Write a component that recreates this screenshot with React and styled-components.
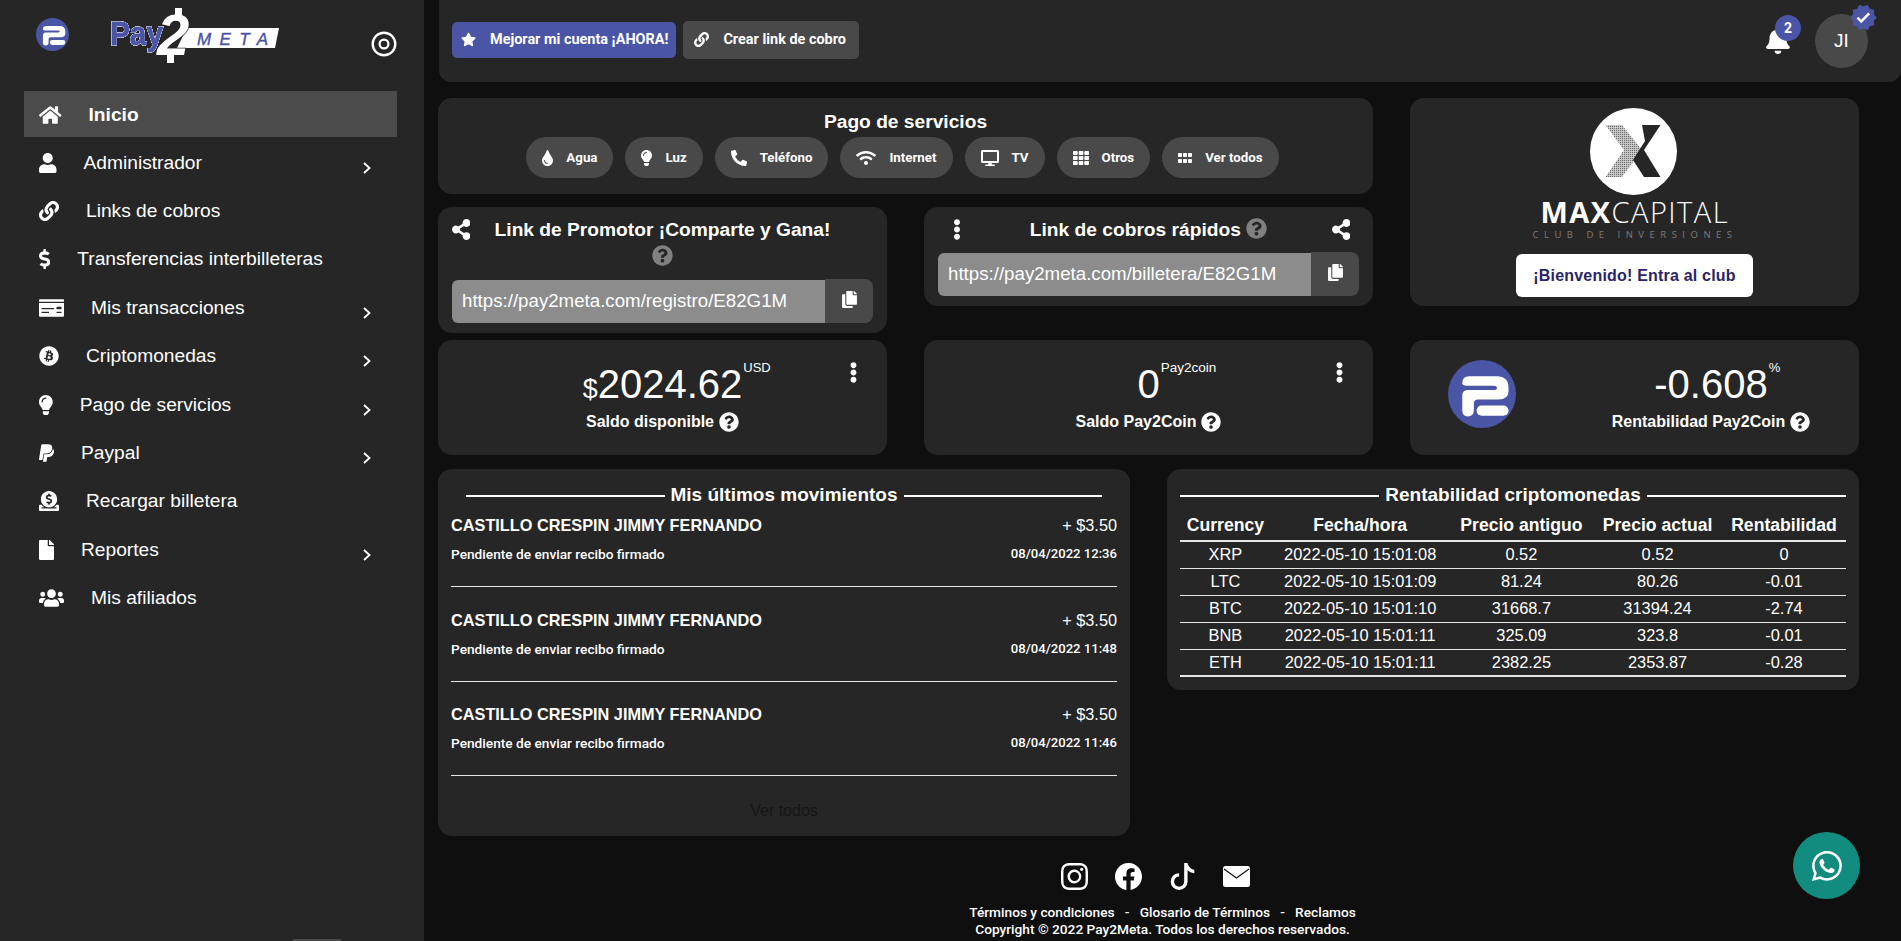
import React from "react"
import styled, { createGlobalStyle } from "styled-components"
import {
  FaHome, FaUser, FaLink, FaDollarSign, FaMoneyCheck, FaBitcoin, FaLightbulb, FaPaypal,
  FaDonate, FaFile, FaUsers, FaStar, FaBell, FaTint, FaPhoneAlt, FaWifi, FaDesktop, FaTh,
  FaGripHorizontal, FaShareAlt, FaEllipsisV, FaQuestionCircle, FaCopy,
} from "react-icons/fa"
import { MdVerified } from "react-icons/md"
import { BsInstagram, BsFacebook, BsTiktok, BsWhatsapp } from "react-icons/bs"

const GlobalStyle = createGlobalStyle`
  html, body {
    margin: 0;
    height: 100%;
    overflow: hidden;
    background: #0f0f0f;
    color: #fff;
    font-family: "Liberation Sans", Arial, sans-serif;
  }
  * { box-sizing: border-box; }
`

const Layout = styled.div`
  display: flex;
  width: 1901px;
  height: 941px;
`

const Sidebar = styled.aside`
  position: relative;
  flex: 0 0 424px;
  height: 941px;
  background: #262626;
  padding-left: 24px;
`

const SideHead = styled.div`
  display: flex;
  height: 91px;
  width: 373px;
  padding: 18px 0 0 12px;
`

const LogoSvg = styled.svg`
  flex: none;
  width: 175px;
  height: 56px;
  margin: -10px 0 0 40px;
  overflow: visible;
`

const LogoPay = styled.text`
  font-family: "Liberation Sans", sans-serif;
  font-weight: 700;
  font-size: 33px;
  fill: #4b55a5;
  stroke: #4b55a5;
  stroke-width: 0.9px;
  filter: drop-shadow(0 0 0.5px #fff) drop-shadow(0 0 0.5px #fff) drop-shadow(0 0 0.4px #fff);
`

const RingSvg = styled.svg`
  width: 26px;
  height: 26px;
  margin: 13px 0 0 auto;
`

const Menu = styled.nav`
  display: flex;
  flex-direction: column;
  width: 373px;
`

const MenuItem = styled.a`
  display: flex;
  align-items: center;
  height: ${(p) => (p.$active ? "46px" : "48.4px")};
  margin-bottom: ${(p) => (p.$active ? "1px" : "0")};
  padding: 1px 26px 0 15px;
  background: ${(p) => (p.$active ? "#4b4b4b" : "transparent")};
  font-size: 19.2px;
  font-weight: ${(p) => (p.$active ? 700 : 400)};
  color: #fff;

  svg.main {
    width: ${(p) => p.$iconWidth}px;
    height: 20px;
    margin-right: 27px;
    flex: none;
  }
`

const Chevron = styled.svg`
  width: 8px;
  height: 12px;
  margin: 10px 0 0 auto;
`

const ScrollThumb = styled.div`
  position: absolute;
  left: 293px;
  bottom: 0;
  width: 48px;
  height: 2px;
  background: #4a4a4a;
`

const Main = styled.main`
  flex: 1;
  display: flex;
  flex-direction: column;
  padding-left: 14px;
  min-width: 0;
`

const Topbar = styled.header`
  display: flex;
  align-items: center;
  height: 82px;
  margin-left: 1px;
  padding: 0 33px 0 13px;
  background: #262626;
  border-radius: 0 0 12px 12px;
`

const TopButton = styled.button`
  display: flex;
  align-items: center;
  height: ${(p) => (p.$primary ? "36px" : "38px")};
  margin-right: 7px;
  margin-bottom: 3px;
  padding: ${(p) => (p.$primary ? "0 8px 0 9px" : "0 13px 0 11px")};
  border: 0;
  border-radius: 5px;
  background: ${(p) => (p.$primary ? "#4b55a5" : "#494949")};
  color: #fff;
  font-family: Roboto, sans-serif;
  font-size: 14.45px;
  font-weight: 700;
  white-space: nowrap;

  svg {
    width: 15px;
    height: 15px;
    margin-right: 14px;
  }
`

const TopRight = styled.div`
  display: flex;
  align-items: center;
  margin-left: auto;
`

const BellWrap = styled.div`
  position: relative;
  width: 24px;
  height: 28px;
  margin-right: 25px;

  svg {
    width: 24px;
    height: 27px;
  }
`

const Count = styled.span`
  position: absolute;
  top: -12px;
  left: 9px;
  width: 26px;
  height: 26px;
  border-radius: 50%;
  background: #4b55a5;
  font: 700 14px/26px Roboto, sans-serif;
  text-align: center;
`

const Avatar = styled.div`
  position: relative;
  display: flex;
  align-items: center;
  justify-content: center;
  width: 53px;
  height: 54px;
  border-radius: 50%;
  background: #494949;
  font-size: 19px;
`

const VerifiedBadge = styled(MdVerified)`
  position: absolute;
  top: -11px;
  right: -10px;
  width: 29px;
  height: 29px;
  color: #4b55a5;
  background: radial-gradient(circle, #fff 40%, transparent 42%);
`

const Content = styled.div`
  display: grid;
  grid-template-columns: repeat(3, 449px);
  grid-template-rows: 96px auto;
  column-gap: 37px;
  row-gap: 13px;
  margin-top: 16px;
`

const Card = styled.section`
  position: relative;
  background: #262626;
  border-radius: 14px;
`

const ServicesCard = styled(Card)`
  grid-column: span 2;
  padding-top: 12px;
  text-align: center;
`

const Title = styled.h2`
  margin: 0;
  font-size: 19.2px;
  line-height: ${(p) => (p.$tall ? "27px" : "23px")};
  font-weight: 700;
`

const Pills = styled.div`
  display: flex;
  justify-content: center;
  gap: 12px;
  margin-top: 4px;
  padding-right: 6px;
`

const Pill = styled.a`
  display: flex;
  align-items: center;
  height: 41px;
  padding: 0 16px;
  border-radius: 21px;
  background: #494949;
  font-family: Roboto, sans-serif;
  font-size: 13.3px;
  font-weight: 700;
  color: #fff;

  svg {
    width: ${(p) => p.$iconWidth}px;
    height: 16px;
    margin-right: 13px;
  }
`

const LinkCard = styled(Card)`
  padding: 9px 14px 10px;
  align-self: start;
`

const LinkHead = styled.div`
  display: grid;
  grid-template-columns: 1fr ${(p) => p.$titleWidth}px 1fr;
  align-items: start;
  margin-bottom: 9px;
  text-align: center;
`

const HeadIcon = styled.span`
  display: flex;
  justify-content: ${(p) => (p.$right ? "flex-end" : "flex-start")};
  padding: 3px ${(p) => p.$right || 0}px 0 ${(p) => p.$left || 0}px;

  svg {
    width: ${(p) => p.$iconWidth}px;
    height: 21px;
  }
`

const Help = styled(FaQuestionCircle)`
  width: ${(p) => (p.$muted ? 21 : 20)}px;
  height: ${(p) => (p.$muted ? 21 : 20)}px;
  color: ${(p) => (p.$muted ? "#808080" : "#fff")};
  vertical-align: -3px;
`

const LinkRow = styled.div`
  display: flex;
  align-items: center;
`

const LinkInput = styled.input`
  flex: 1;
  min-width: 0;
  height: 43px;
  padding: 0 10px;
  border: 0;
  border-radius: 6px 0 0 6px;
  background: #8c8c8c;
  color: #fff;
  font-family: "Liberation Sans", Arial, sans-serif;
  font-size: 18.7px;
`

const CopyButton = styled.button`
  display: flex;
  align-items: center;
  justify-content: center;
  width: 48px;
  height: 44px;
  padding: 0 0 4px;
  border: 0;
  border-radius: 0 8px 8px 0;
  background: #494949;
  color: #fff;

  svg {
    width: 15px;
    height: 17px;
  }
`

const MaxCard = styled(Card)`
  grid-column: 3;
  grid-row: 1 / span 2;
  height: 208px;
  display: flex;
  flex-direction: column;
  align-items: center;
  padding-top: 10px;
`

const MaxLogo = styled.svg`
  flex: none;
  width: 210px;
  height: 132px;
`

const ClubButton = styled.button`
  width: 237px;
  height: 43px;
  margin-top: 14px;
  border: 0;
  border-radius: 6px;
  background: #fff;
  color: #2a2468;
  font-family: "Liberation Sans", Arial, sans-serif;
  font-size: 16px;
  font-weight: 700;
  letter-spacing: 0.2px;
`

const Balances = styled.div`
  display: grid;
  grid-template-columns: repeat(3, 449px);
  column-gap: 37px;
  margin-top: 7px;
`

const BalanceCard = styled(Card)`
  display: flex;
  flex-direction: column;
  align-items: center;
  height: 115px;
  padding: ${(p) => (p.$coin ? "18px 0 0 153px" : "18px 0 0")};
`

const Amount = styled.div`
  position: relative;
  height: 52px;
  font-size: 40px;
  line-height: 52px;
  white-space: nowrap;
`

const Currency = styled.span`
  font-size: 27px;
  line-height: 1;
`

const Sup = styled.span`
  position: absolute;
  left: 100%;
  top: 2px;
  margin-left: 1px;
  font-size: ${(p) => p.$size || 13}px;
  line-height: 16px;
`

const BalanceLabel = styled.div`
  display: flex;
  align-items: center;
  gap: 5px;
  margin-top: 1px;
  font-size: 16px;
  font-weight: 700;
  line-height: 22px;
`

const MoreButton = styled(FaEllipsisV)`
  position: absolute;
  top: 22px;
  right: 23px;
  width: 21px;
  height: 21px;
`

const CoinIcon = styled.svg`
  position: absolute;
  left: 38px;
  top: 20px;
  width: 68px;
  height: 68px;
`

const Lower = styled.div`
  display: grid;
  grid-template-columns: 692px 692px;
  column-gap: 37px;
  align-items: start;
  margin-top: 14px;
`

const PanelCard = styled(Card)`
  padding: 14px 13px 0;
`

const PanelTitle = styled.h3`
  display: flex;
  align-items: center;
  gap: 6px;
  margin: 0 ${(p) => p.$inset || 0}px 5px;
  font-size: 19px;
  line-height: 23px;
  font-weight: 700;
  white-space: nowrap;

  &::before, &::after {
    content: "";
    flex: 1;
    height: 2px;
    background: #fff;
    margin-top: 3px;
  }
`

const MoveRow = styled.div`
  height: 76px;
  margin-bottom: 18.5px;
  padding-top: 4px;
  border-bottom: 1px solid #e6e6e6;
`

const MoveLine = styled.div`
  display: flex;
  justify-content: space-between;
  font-size: 16.3px;
  line-height: 20px;
`

const MoveName = styled.span`
  font-weight: 700;
`

const MoveSub = styled.div`
  display: flex;
  justify-content: space-between;
  margin-top: 11px;
  font-family: Roboto, sans-serif;
  font-size: 13.7px;
  font-weight: 500;
  line-height: 16px;
`

const MoveDate = styled.span`
  font-size: 13.1px;
`

const VerTodos = styled.a`
  display: block;
  height: 41.5px;
  line-height: 31px;
  text-align: center;
  font-size: 16px;
  color: #161616;
`

const RateTable = styled.table`
  width: 100%;
  border-collapse: collapse;
  border-bottom: 2px solid #e6e6e6;
  margin-bottom: 13px;
  font-size: 16.4px;
  text-align: center;

  th {
    height: 30px;
    padding: 0;
    border-bottom: 2px solid #e6e6e6;
    font-size: 17.6px;
    font-weight: 700;
    white-space: nowrap;
  }

  td {
    height: 27px;
    padding: 0;
    border-bottom: 1px solid #e6e6e6;
  }

  tr:last-child td {
    border-bottom: 0;
  }
`

const Footer = styled.footer`
  margin: 27px 0 0 -14px;
  text-align: center;
  font-family: Roboto, sans-serif;
  font-size: 13.7px;
  font-weight: 500;
  line-height: 17px;
`

const Socials = styled.div`
  display: flex;
  justify-content: center;
  gap: 27px;
  margin-bottom: 14px;
  padding-right: 14px;

  svg {
    width: 27px;
    height: 27px;
  }
`

const Fab = styled.a`
  position: fixed;
  left: 1793px;
  top: 832px;
  display: flex;
  align-items: center;
  justify-content: center;
  width: 67px;
  height: 67px;
  border-radius: 50%;
  background: #128c7e;
  color: #fff;

  svg {
    width: 30px;
    height: 30px;
  }
`

const P2Mark = () => (
  <>
    <circle cx="50" cy="50" r="50" fill="#4b55a5" />
    <path
      d="M21 34 Q21 24 31 24 H72 Q89 24 89 41 V46 Q89 58 74 58 H44 Q38 58 38 64 V74 Q38 83 29 83 Q21 83 21 74 V52 Q21 44 30 44 H67 Q72 44 72 41 Q72 38 67 38 H28 Q21 38 21 34 Z"
      fill="#fff"
    />
    <rect x="42" y="67" width="47" height="15" rx="7.5" fill="#fff" />
  </>
)

const MailIcon = () => (
  <svg viewBox="0 0 27 27">
    <rect x="0" y="3" width="27" height="21" rx="2.5" fill="#fff" />
    <polyline points="1,6 13.5,15 26,6" fill="none" stroke="#0f0f0f" strokeWidth="1.2" />
  </svg>
)

const menu = [
  { label: "Inicio", icon: FaHome, w: 22.5, active: true },
  { label: "Administrador", icon: FaUser, w: 17.5, more: true },
  { label: "Links de cobros", icon: FaLink, w: 20 },
  { label: "Transferencias interbilleteras", icon: FaDollarSign, w: 11.25 },
  { label: "Mis transacciones", icon: FaMoneyCheck, w: 25, more: true },
  { label: "Criptomonedas", icon: FaBitcoin, w: 20, more: true },
  { label: "Pago de servicios", icon: FaLightbulb, w: 13.75, more: true },
  { label: "Paypal", icon: FaPaypal, w: 15, more: true },
  { label: "Recargar billetera", icon: FaDonate, w: 20 },
  { label: "Reportes", icon: FaFile, w: 15, more: true },
  { label: "Mis afiliados", icon: FaUsers, w: 25 },
]

const services = [
  { label: "Agua", icon: FaTint, w: 11 },
  { label: "Luz", icon: FaLightbulb, w: 11 },
  { label: "Teléfono", icon: FaPhoneAlt, w: 16 },
  { label: "Internet", icon: FaWifi, w: 20 },
  { label: "TV", icon: FaDesktop, w: 18 },
  { label: "Otros", icon: FaTh, w: 16 },
  { label: "Ver todos", icon: FaGripHorizontal, w: 14 },
]

const moves = [
  { date: "08/04/2022 12:36" },
  { date: "08/04/2022 11:48" },
  { date: "08/04/2022 11:46" },
]

const rates = [
  ["XRP", "2022-05-10 15:01:08", "0.52", "0.52", "0"],
  ["LTC", "2022-05-10 15:01:09", "81.24", "80.26", "-0.01"],
  ["BTC", "2022-05-10 15:01:10", "31668.7", "31394.24", "-2.74"],
  ["BNB", "2022-05-10 15:01:11", "325.09", "323.8", "-0.01"],
  ["ETH", "2022-05-10 15:01:11", "2382.25", "2353.87", "-0.28"],
]

const App = () => (
  <Layout>
    <GlobalStyle />
    <Sidebar>
      <SideHead>
        <svg width="33" height="33" viewBox="0 0 100 100">
          <P2Mark />
        </svg>
        <LogoSvg viewBox="0 0 175 56">
          <polygon points="78,20 170,20 166,40 68,40" fill="#fff" />
          <text x="88" y="37" fontFamily="Liberation Sans" fontStyle="italic" fontSize="17" fill="#4b55a5" stroke="#4b55a5" strokeWidth="0.4" textLength="71">META</text>
          <LogoPay x="1" y="37" textLength="53" lengthAdjust="spacingAndGlyphs">Pay</LogoPay>
          <text x="48" y="47" fontFamily="Liberation Sans" fontWeight="700" fontStyle="italic" fontSize="58" fill="#fff" stroke="#262626" strokeWidth="1.5" paintOrder="stroke">2</text>
          <rect x="66" y="0" width="7" height="9" fill="#fff" />
          <rect x="58" y="46" width="7" height="9" fill="#fff" />
        </LogoSvg>
        <RingSvg viewBox="0 0 26 26">
          <circle cx="13" cy="13" r="11.3" fill="none" stroke="#fff" strokeWidth="2.4" />
          <circle cx="13" cy="13" r="4.4" fill="none" stroke="#fff" strokeWidth="2.2" />
        </RingSvg>
      </SideHead>
      <Menu>
        {menu.map((item) => (
          <MenuItem key={item.label} $active={item.active} $iconWidth={item.w}>
            <item.icon className="main" />
            {item.label}
            {item.more && (
              <Chevron viewBox="0 0 8 12">
                <polyline points="1,1 6.5,6 1,11" fill="none" stroke="#fff" strokeWidth="1.8" />
              </Chevron>
            )}
          </MenuItem>
        ))}
      </Menu>
      <ScrollThumb />
    </Sidebar>

    <Main>
      <Topbar>
        <TopButton $primary>
          <FaStar />
          Mejorar mi cuenta ¡AHORA!
        </TopButton>
        <TopButton>
          <FaLink />
          Crear link de cobro
        </TopButton>
        <TopRight>
          <BellWrap>
            <FaBell />
            <Count>2</Count>
          </BellWrap>
          <Avatar>
            JI
            <VerifiedBadge />
          </Avatar>
        </TopRight>
      </Topbar>

      <Content>
        <ServicesCard>
          <Title>Pago de servicios</Title>
          <Pills>
            {services.map((s) => (
              <Pill key={s.label} $iconWidth={s.w}>
                <s.icon />
                {s.label}
              </Pill>
            ))}
          </Pills>
        </ServicesCard>

        <MaxCard>
          <MaxLogo viewBox="0 0 210 132">
            <defs>
              <pattern id="maxDots" width="2" height="2" patternUnits="userSpaceOnUse">
                <rect width="2" height="2" fill="#d4d4d4" />
                <rect width="1.2" height="1.2" fill="#6e6e6e" />
              </pattern>
            </defs>
            <circle cx="103.5" cy="43.5" r="43.5" fill="#fff" />
            <polygon points="75.5,17 92,17 112,42 92,69 75.5,69 94,42" fill="url(#maxDots)" />
            <polygon points="112,17 130.5,17 114,42 130.5,69 114,69 103,52 115,33" fill="#262626" />
            <text x="104" y="115" textAnchor="middle" fontFamily="Open Sans, Liberation Sans" fontSize="29" fill="#fff" textLength="187"><tspan fontWeight="700">MAX</tspan><tspan fontWeight="300">CAPITAL</tspan></text>
            <text x="105" y="130" textAnchor="middle" fontFamily="Open Sans, Liberation Sans" fontSize="9.5" fill="#7c7c7c" letterSpacing="5.5">CLUB DE INVERSIONES</text>
          </MaxLogo>
          <ClubButton>¡Bienvenido! Entra al club</ClubButton>
        </MaxCard>

        <LinkCard>
          <LinkHead $titleWidth={345}>
            <HeadIcon $iconWidth={18.4}>
              <FaShareAlt />
            </HeadIcon>
            <Title $tall>
              Link de Promotor ¡Comparte y Gana! <Help $muted />
            </Title>
            <span />
          </LinkHead>
          <LinkRow>
            <LinkInput readOnly value="https://pay2meta.com/registro/E82G1M" />
            <CopyButton>
              <FaCopy />
            </CopyButton>
          </LinkRow>
        </LinkCard>

        <LinkCard>
          <LinkHead $titleWidth={260}>
            <HeadIcon $left={15} $iconWidth={8}>
              <FaEllipsisV />
            </HeadIcon>
            <Title $tall>
              Link de cobros rápidos <Help $muted />
            </Title>
            <HeadIcon $right={9} $iconWidth={18.4}>
              <FaShareAlt />
            </HeadIcon>
          </LinkHead>
          <LinkRow>
            <LinkInput readOnly value="https://pay2meta.com/billetera/E82G1M" />
            <CopyButton>
              <FaCopy />
            </CopyButton>
          </LinkRow>
        </LinkCard>
      </Content>

      <Balances>
        <BalanceCard>
          <Amount>
            <Currency>$</Currency>2024.62<Sup>USD</Sup>
          </Amount>
          <BalanceLabel>
            Saldo disponible <Help />
          </BalanceLabel>
          <MoreButton />
        </BalanceCard>
        <BalanceCard>
          <Amount>
            0<Sup $size={13.5}>Pay2coin</Sup>
          </Amount>
          <BalanceLabel>
            Saldo Pay2Coin <Help />
          </BalanceLabel>
          <MoreButton />
        </BalanceCard>
        <BalanceCard $coin>
          <CoinIcon viewBox="0 0 100 100">
            <P2Mark />
          </CoinIcon>
          <Amount>
            -0.608<Sup>%</Sup>
          </Amount>
          <BalanceLabel>
            Rentabilidad Pay2Coin <Help />
          </BalanceLabel>
        </BalanceCard>
      </Balances>

      <Lower>
        <PanelCard>
          <PanelTitle $inset={15}>Mis últimos movimientos</PanelTitle>
          {moves.map((m) => (
            <MoveRow key={m.date}>
              <MoveLine>
                <MoveName>CASTILLO CRESPIN JIMMY FERNANDO</MoveName>
                <span>+ $3.50</span>
              </MoveLine>
              <MoveSub>
                <span>Pendiente de enviar recibo firmado</span>
                <MoveDate>{m.date}</MoveDate>
              </MoveSub>
            </MoveRow>
          ))}
          <VerTodos>Ver todos</VerTodos>
        </PanelCard>

        <PanelCard>
          <PanelTitle>Rentabilidad criptomonedas</PanelTitle>
          <RateTable>
            <thead>
              <tr>
                <th>Currency</th>
                <th>Fecha/hora</th>
                <th>Precio antiguo</th>
                <th>Precio actual</th>
                <th>Rentabilidad</th>
              </tr>
            </thead>
            <tbody>
              {rates.map((r) => (
                <tr key={r[0]}>
                  {r.map((c, i) => (
                    <td key={i}>{c}</td>
                  ))}
                </tr>
              ))}
            </tbody>
          </RateTable>
        </PanelCard>
      </Lower>

      <Footer>
        <Socials>
          <BsInstagram />
          <BsFacebook />
          <BsTiktok />
          <MailIcon />
        </Socials>
        <div>Términos y condiciones &nbsp;&nbsp;-&nbsp;&nbsp; Glosario de Términos &nbsp;&nbsp;-&nbsp;&nbsp; Reclamos</div>
        <div>Copyright © 2022 Pay2Meta. Todos los derechos reservados.</div>
      </Footer>
    </Main>

    <Fab>
      <BsWhatsapp />
    </Fab>
  </Layout>
)

export default App
